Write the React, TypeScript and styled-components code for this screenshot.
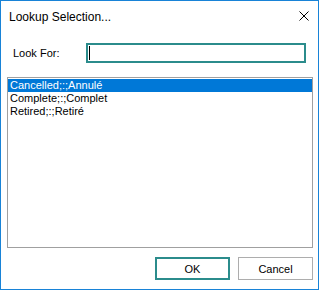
import React from "react";
import styled, { createGlobalStyle } from "styled-components";

const Global = createGlobalStyle`
  html, body { margin: 0; padding: 0; background: #ffffff; }
  * { box-sizing: border-box; }
`;

const Window = styled.div`
  width: 319px;
  height: 290px;
  border: 1px solid #1883d7;
  background: #ffffff;
  display: flex;
  flex-direction: column;
  font-family: "Liberation Sans", Arial, sans-serif;
  color: #000000;
`;

const TitleBar = styled.div`
  height: 30px;
  display: flex;
  align-items: center;
  justify-content: space-between;
  padding-left: 8px;
  padding-right: 9px;
`;

const Title = styled.span`
  font-size: 12px;
  line-height: 14px;
  margin-top: 1px;
`;

const CloseIcon = styled.svg`
  display: block;
  width: 10px;
  height: 10px;
`;

const Body = styled.div`
  flex: 1;
  display: flex;
  flex-direction: column;
  padding: 12px 5px 9px 6px;
`;

const SearchRow = styled.div`
  display: flex;
  align-items: center;
  height: 20px;
  padding-left: 6px;
`;

const Label = styled.span`
  width: 73px;
  font-size: 11px;
  line-height: 13px;
`;

const TextBox = styled.div`
  width: 220px;
  height: 20px;
  border: 2px solid #2b8c8c;
  position: relative;
  &::before {
    content: "";
    position: absolute;
    left: 1px;
    top: 1px;
    width: 1px;
    height: 14px;
    background: #000000;
  }
`;

const ListBox = styled.div`
  margin-top: 14px;
  height: 171px;
  border: 1px solid #a0a0a0;
  padding-top: 1px;
  display: flex;
  flex-direction: column;
`;

const Row = styled.div<{ $selected?: boolean }>`
  height: 13px;
  line-height: 13px;
  font-size: 11px;
  padding-left: 2px;
  white-space: nowrap;
  background: ${(p) => (p.$selected ? "#0078d7" : "transparent")};
  color: ${(p) => (p.$selected ? "#ffffff" : "#000000")};
`;

const Buttons = styled.div`
  margin-top: 9px;
  display: flex;
  justify-content: flex-end;
  gap: 8px;
`;

const Button = styled.button<{ $default?: boolean }>`
  width: 75px;
  height: 23px;
  padding: 0;
  background: #ffffff;
  border: ${(p) => (p.$default ? "2px solid #2b8c8c" : "1px solid #adadad")};
  font-family: "Liberation Sans", Arial, sans-serif;
  font-size: 11px;
  color: #000000;
  display: flex;
  align-items: center;
  justify-content: center;
`;

const items = ["Cancelled;:;Annulé", "Complete;:;Complet", "Retired;:;Retiré"];

export default function App() {
  return (
    <>
      <Global />
      <Window>
        <TitleBar>
          <Title>Lookup Selection...</Title>
          <CloseIcon viewBox="0 0 10 10">
            <path d="M0.5 0.5 L9.5 9.5 M9.5 0.5 L0.5 9.5" stroke="#000" strokeWidth="1" fill="none" />
          </CloseIcon>
        </TitleBar>
        <Body>
          <SearchRow>
            <Label>Look For:</Label>
            <TextBox />
          </SearchRow>
          <ListBox>
            {items.map((t, i) => (
              <Row key={t} $selected={i === 0}>
                {t}
              </Row>
            ))}
          </ListBox>
          <Buttons>
            <Button $default>OK</Button>
            <Button>Cancel</Button>
          </Buttons>
        </Body>
      </Window>
    </>
  );
}
